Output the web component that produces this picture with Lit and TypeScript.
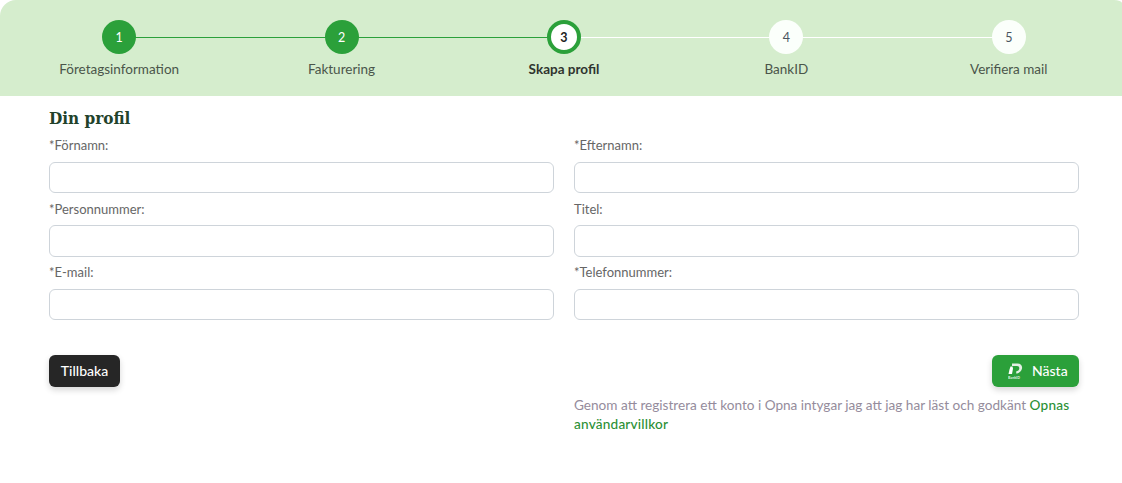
import { LitElement, html, css } from "lit";
import { customElement } from "lit/decorators.js";

const steps = [
  { n: 1, label: "Företagsinformation", state: "done" },
  { n: 2, label: "Fakturering", state: "done" },
  { n: 3, label: "Skapa profil", state: "active" },
  { n: 4, label: "BankID", state: "todo" },
  { n: 5, label: "Verifiera mail", state: "todo" },
];
const fields = ["*Förnamn:", "*Efternamn:", "*Personnummer:", "Titel:", "*E-mail:", "*Telefonnummer:"];

@customElement("app-root")
export class AppRoot extends LitElement {
  static styles = css`
    :host { display: block; width: 1122px; height: 483px; background: #fff; font-family: "Lato", "Noto Sans", sans-serif; color: #444; overflow: hidden; }
    .header { height: 96px; background: #d5edcd; border-top-left-radius: 16px; border-top-right-radius: 8px 3px; display: grid; grid-template-columns: repeat(5, 222.4px); padding: 20px 0 0 8px; box-sizing: border-box; }
    .step { display: flex; flex-direction: column; align-items: center; position: relative; }
    .step:not(:last-child)::after { content: ""; position: absolute; top: 17px; left: 50%; width: 100%; height: 1px; background: #fff; }
    .step.done:not(:last-child)::after { background: #2ba03a; }
    .circle { width: 34px; height: 34px; border-radius: 50%; box-sizing: border-box; display: flex; align-items: center; justify-content: center; font-size: 12.5px; position: relative; z-index: 1; }
    .done .circle { background: #2ba03a; color: #fff; }
    .active .circle { background: #fff; border: 4px solid #2ba03a; color: #222; font-weight: 700; }
    .todo .circle { background: #fbfffb; color: #4a5560; }
    .label { margin-top: 6px; font-size: 13.5px; line-height: 18px; color: #4a554a; white-space: nowrap; }
    .active .label { font-weight: 700; color: #2f342f; }
    main { padding: 10px 43px 0 49px; }
    h2 { margin: 0; font: 700 17px/24px "DejaVu Serif", "Liberation Serif", serif; font-stretch: condensed; color: #22422a; }
    .grid { display: grid; grid-template-columns: 505px 505px; column-gap: 20px; margin-top: 7px; }
    .field { height: 63.5px; display: flex; flex-direction: column; }
    label { font-size: 13px; line-height: 17px; height: 24.9px; flex: none; color: #666; }
    .input { height: 31.4px; box-sizing: border-box; border: 1px solid #ced4da; border-radius: 6px; background: #fff; }
    .actions { display: flex; justify-content: space-between; margin-top: 27px; }
    button { height: 32px; border: 0; border-radius: 6px; font: 500 14px "Lato", sans-serif; color: #fff; box-shadow: 0 3px 6px rgba(0,0,0,.16); display: flex; align-items: center; padding: 0; }
    .back { background: #262626; width: 71px; justify-content: center; }
    .next { background: #2ba03a; width: 87px; gap: 9px; padding: 0 0 0 15px; }
    .terms { margin: 9px 0 0 525px; width: 505px; font-size: 13.6px; line-height: 19px; color: #958c9c; }
    .terms b { color: #2b9035; font-weight: 500; letter-spacing: .2px; }
    svg text { font: 700 3.600px "Lato", sans-serif; }
  `;

  render() {
    return html`
      <div class="header">
        ${steps.map((s) => html`<div class="step ${s.state}"><div class="circle">${s.n}</div><div class="label">${s.label}</div></div>`)}
      </div>
      <main>
        <h2>Din profil</h2>
        <div class="grid">
          ${fields.map((f) => html`<div class="field"><label>${f}</label><div class="input"></div></div>`)}
        </div>
        <div class="actions">
          <button class="back">Tillbaka</button>
          <button class="next">
            <svg width="16" height="16" viewBox="0 0 16 16" fill="#e4efe4"><path d="M5 .5h5.500c3.500 0 5 2.300 4.500 5-.4 2.300-2.600 4.800-5.500 5.300L9 8.500c2-.5 3.200-1.500 3.300-3 .1-1.500-.8-2.500-2.300-2.500H5z"/><path d="M3.500 3.500H5.500L6 5.500 5 11H1.500L2.500 6.500z" fill="#fff"/><text x="1" y="15.500" fill="#fff" opacity=".85">BankID</text></svg>
            Nästa
          </button>
        </div>
        <p class="terms">Genom att registrera ett konto i Opna intygar jag att jag har läst och godkänt <b>Opnas</b> <b>användarvillkor</b></p>
      </main>
    `;
  }
}
